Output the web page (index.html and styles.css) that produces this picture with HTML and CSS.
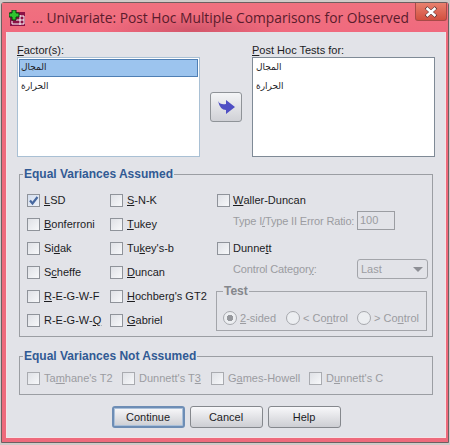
FILE: index.html
```html
<!DOCTYPE html>
<html lang="en">
<head>
    <meta charset="UTF-8">
    <title>Univariate: Post Hoc Multiple Comparisons</title>
    <link rel="stylesheet" href="styles.css">
</head>
<body>
    <div class="window">
        <header class="titlebar">
            <svg class="app-icon" width="16" height="16" viewBox="0 0 16 16">
                <rect x="1" y="2" width="15" height="14" fill="#8c1246"/>
                <path d="M7 6h8v8H3v-3" fill="none" stroke="#fff" stroke-width="1"/>
                <path d="M11 5v10M7 10h8" stroke="#fff" stroke-width="1"/>
                <path d="M3 0h4v3h3v4H7v3H3V7H0V3h3z" fill="#2fc42f" stroke="#0c3a12" stroke-width="1"/>
            </svg>
            <span class="title">... Univariate: Post Hoc Multiple Comparisons for Observed</span>
            <button class="close">
                <svg width="14" height="12" viewBox="0 0 14 12">
                    <path d="M2 1.5l10 9M12 1.5l-10 9" stroke="#4a2a2a" stroke-width="3.6"/>
                    <path d="M2.5 2l9 8M11.5 2l-9 8" stroke="#fff" stroke-width="2.6"/>
                </svg>
            </button>
        </header>

        <div class="panel">
            <section class="lists">
                <div class="list-col">
                    <label class="list-label"><u>F</u>actor(s):</label>
                    <ul class="listbox factor-list">
                        <li class="selected" dir="rtl">المجال</li>
                        <li dir="rtl">الحرارة</li>
                    </ul>
                </div>
                <button class="move-btn">
                    <svg width="17" height="14" viewBox="0 0 17 14">
                        <path d="M0 1Q2 5 8 4V0l9 7-9 7V10Q2 10 0 1z" fill="#4f4fc4"/>
                    </svg>
                </button>
                <div class="list-col">
                    <label class="list-label"><u>P</u>ost Hoc Tests for:</label>
                    <ul class="listbox tests-list">
                        <li dir="rtl">المجال</li>
                        <li dir="rtl">الحرارة</li>
                    </ul>
                </div>
            </section>

            <fieldset class="group assumed">
                <legend>Equal Variances Assumed</legend>
                <div class="assumed-cols">
                    <div class="col col-one">
                        <div class="check-row"><span class="box checked"><svg width="11" height="11" viewBox="0 0 11 11"><path d="M2 5.5l2.5 3L9.5 2" fill="none" stroke="#47689f" stroke-width="2.2"/></svg></span><u>L</u>SD</div>
                        <div class="check-row"><span class="box"></span><u>B</u>onferroni</div>
                        <div class="check-row"><span class="box"></span>Si<u>d</u>ak</div>
                        <div class="check-row"><span class="box"></span>S<u>c</u>heffe</div>
                        <div class="check-row"><span class="box"></span><u>R</u>-E-G-W-F</div>
                        <div class="check-row"><span class="box"></span>R-E-G-W-<u>Q</u></div>
                    </div>
                    <div class="col col-two">
                        <div class="check-row"><span class="box"></span><u>S</u>-N-K</div>
                        <div class="check-row"><span class="box"></span><u>T</u>ukey</div>
                        <div class="check-row"><span class="box"></span>Tu<u>k</u>ey's-b</div>
                        <div class="check-row"><span class="box"></span><u>D</u>uncan</div>
                        <div class="check-row"><span class="box"></span><u>H</u>ochberg's GT2</div>
                        <div class="check-row"><span class="box"></span><u>G</u>abriel</div>
                    </div>
                    <div class="col col-three">
                        <div class="check-row short"><span class="box"></span><u>W</u>aller-Duncan</div>
                        <div class="sub-row disabled">
                            <span class="sub-label">Type I<u>/</u>Type II Error Ratio:</span>
                            <span class="ratio-input">100</span>
                        </div>
                        <div class="check-row dunnett"><span class="box"></span>Dunne<u>t</u>t</div>
                        <div class="sub-row disabled">
                            <span class="sub-label">Control Categor<u>y</u>:</span>
                            <span class="select">Last<i class="caret"></i></span>
                        </div>
                        <fieldset class="test-group disabled">
                            <legend>Test</legend>
                            <div class="radios">
                                <span class="radio-item two-sided"><span class="radio on"></span><u>2</u>-sided</span>
                                <span class="radio-item less"><span class="radio"></span>&lt; Co<u>n</u>trol</span>
                                <span class="radio-item"><span class="radio"></span>&gt; Co<u>n</u>trol</span>
                            </div>
                        </fieldset>
                    </div>
                </div>
            </fieldset>

            <fieldset class="group not-assumed">
                <legend>Equal Variances Not Assumed</legend>
                <div class="not-assumed-row disabled">
                    <div class="check-row tamhane"><span class="box"></span>Ta<u>m</u>hane's T2</div>
                    <div class="check-row dunnett-t3"><span class="box"></span>Dunnett's T<u>3</u></div>
                    <div class="check-row games"><span class="box"></span>G<u>a</u>mes-Howell</div>
                    <div class="check-row"><span class="box"></span>D<u>u</u>nnett's C</div>
                </div>
            </fieldset>

            <footer class="buttons">
                <button class="btn default">Continue</button>
                <button class="btn">Cancel</button>
                <button class="btn">Help</button>
            </footer>
        </div>
    </div>
</body>
</html>
```

FILE: styles.css
```css
* {
    box-sizing: border-box;
    margin: 0;
    padding: 0;
}

body {
    font-family: 'Liberation Sans', Arial, sans-serif;
    font-size: 11px;
    color: #1c1c1f;
    background-color: #cfcac8;
    overflow: hidden;
}

u {
    text-underline-offset: 1px;
}

.window {
    width: 448px;
    height: 441px;
    margin: 2px 0 0 1px;
    border: 1px solid #6d5f60;
    border-radius: 3px 3px 0 0;
    background-color: #ee6a7c;
}

.titlebar {
    position: relative;
    display: flex;
    align-items: center;
    height: 29px;
    padding: 0 0 0 7px;
    background: radial-gradient(ellipse 90px 16px at 190px 27px, #d2566a, transparent), linear-gradient(#f0717f, #f06a7e);
}

.app-icon {
    flex: none;
    margin-top: 1px;
}

.title {
    margin-left: 7px;
    font-family: 'Open Sans', sans-serif;
    font-size: 13.8px;
    white-space: nowrap;
    color: #5a1c2c;
}

.close {
    position: absolute;
    top: 0;
    right: 1px;
    width: 32px;
    height: 18px;
    display: flex;
    align-items: center;
    justify-content: center;
    border: 1px solid #a84a48;
    border-top: none;
    border-radius: 0 0 3px 3px;
    background: linear-gradient(#e9806e, #d2503f);
}

.panel {
    height: 405px;
    margin: 0 3px 0 5px;
    padding: 11px 10px 0;
    background-color: #e2e3e8;
    box-shadow: 0 0 0 1px #f4e3e6;
}

.lists {
    display: grid;
    grid-template-columns: 183px 1fr 183px;
}

.list-label {
    display: block;
    height: 14px;
    line-height: 14px;
}

.listbox {
    list-style-type: none;
    height: 100px;
    padding: 1px;
    background-color: #fff;
    border: 1px solid #7f8a96;
    font-family: 'DejaVu Sans', sans-serif;
    font-size: 9px;
}

.factor-list {
    border-color: #a9c0d4;
}

.listbox li {
    height: 18px;
    line-height: 17px;
    padding: 0 2px;
    margin-bottom: 1px;
    unicode-bidi: plaintext;
    text-align: left;
}

.listbox li.selected {
    background-color: #9cc4ee;
    box-shadow: inset 0 0 0 1px #4f7fb4;
}

.move-btn {
    align-self: center;
    justify-self: center;
    margin-top: 13px;
    width: 32px;
    height: 30px;
    display: flex;
    align-items: center;
    justify-content: center;
    border: 1px solid #8f9398;
    border-radius: 3px;
    background: linear-gradient(#f4f5f7, #d0d1d6);
}

.group {
    margin: 10px 2px 0;
    padding: 0 7px;
    border: 1px solid #9b9ea3;
    min-width: 0;
}

.group > legend {
    margin-left: -4px;
    padding: 0 1px;
    height: 14px;
    line-height: 14px;
    font-size: 12px;
    font-weight: 700;
    color: #315a94;
}

.assumed {
    height: 170px;
}

.not-assumed {
    height: 46px;
    margin-top: 12px;
}

.assumed-cols {
    display: flex;
    padding-top: 7px;
}

.col {
    flex: none;
}

.col-one {
    width: 83px;
}

.col-two {
    width: 107px;
}

.col-three {
    width: 208px;
}

.check-row {
    display: flex;
    align-items: center;
    height: 24px;
    white-space: nowrap;
}

.check-row.short {
    height: 23px;
    align-items: flex-start;
    padding-top: 5px;
    line-height: 14px;
}

.check-row.short .box {
    margin-top: 1px;
}

.box {
    flex: none;
    width: 13px;
    height: 13px;
    margin-right: 4px;
    display: flex;
    align-items: center;
    justify-content: center;
    border: 1px solid #8f939a;
    background: linear-gradient(135deg, #dfe1e6, #f7f8fa);
}

.box.checked {
    background: linear-gradient(135deg, #d3dded, #eef2f8);
}

.disabled {
    color: #9b9ca1;
}

.disabled .box {
    border-color: #a9abb0;
}

.col-three .box {
    margin-right: 3px;
}

.sub-row {
    display: flex;
    align-items: center;
    height: 19px;
    padding-left: 16px;
}

.sub-label {
    flex: none;
    width: 124px;
    letter-spacing: -0.15px;
    white-space: nowrap;
}

.ratio-input {
    flex: none;
    width: 38px;
    height: 19px;
    line-height: 17px;
    padding-left: 2px;
    border: 1px solid #9b9da2;
}

.dunnett {
    margin-top: 6px;
}

.dunnett + .sub-row {
    height: 20px;
    margin-top: -1px;
}

.select {
    position: relative;
    flex: none;
    width: 71px;
    height: 20px;
    line-height: 18px;
    padding-left: 3px;
    border: 1px solid #a3a5aa;
    border-radius: 3px;
}

.caret {
    position: absolute;
    top: 7px;
    right: 4px;
    border-left: 5px solid transparent;
    border-right: 5px solid transparent;
    border-top: 5px solid #8d8f95;
}

.test-group {
    width: 211px;
    margin-top: 5px;
    margin-left: -1px;
    height: 47px;
    padding: 0 6px;
    border: 1px solid #a3a5aa;
}

.test-group legend {
    margin-left: 0;
    padding: 0 1px;
    height: 14px;
    line-height: 14px;
    font-size: 12px;
    font-weight: 700;
    color: #85878c;
}

.radios {
    display: flex;
    align-items: center;
    height: 15px;
    margin-top: 12px;
}

.radio-item {
    flex: none;
    display: flex;
    align-items: center;
    white-space: nowrap;
}

.two-sided {
    width: 63px;
}

.less {
    width: 71px;
}

.radio {
    flex: none;
    width: 14px;
    height: 14px;
    margin-right: 3px;
    border: 1px solid #a6a8ad;
    border-radius: 50%;
    background-color: #eceef1;
}

.radio.on {
    background: radial-gradient(circle, #96989d 3px, #eceef1 3.5px);
}

.not-assumed-row {
    display: flex;
    padding-top: 3px;
}

.not-assumed-row .check-row {
    flex: none;
}

.tamhane {
    width: 95px;
}

.dunnett-t3 {
    width: 89px;
}

.games {
    width: 98px;
}

.buttons {
    display: flex;
    justify-content: center;
    gap: 5px;
    margin-top: 11px;
}

.btn {
    width: 73px;
    height: 22px;
    font-family: inherit;
    font-size: 11px;
    color: #1c1c1f;
    border: 1px solid #85888d;
    border-radius: 3px;
    background: linear-gradient(#f8f8fa, #cdced3);
}

.btn.default {
    border: 2px solid #6d8db5;
    box-shadow: inset 0 0 0 1px #a9bfd9;
}
```
